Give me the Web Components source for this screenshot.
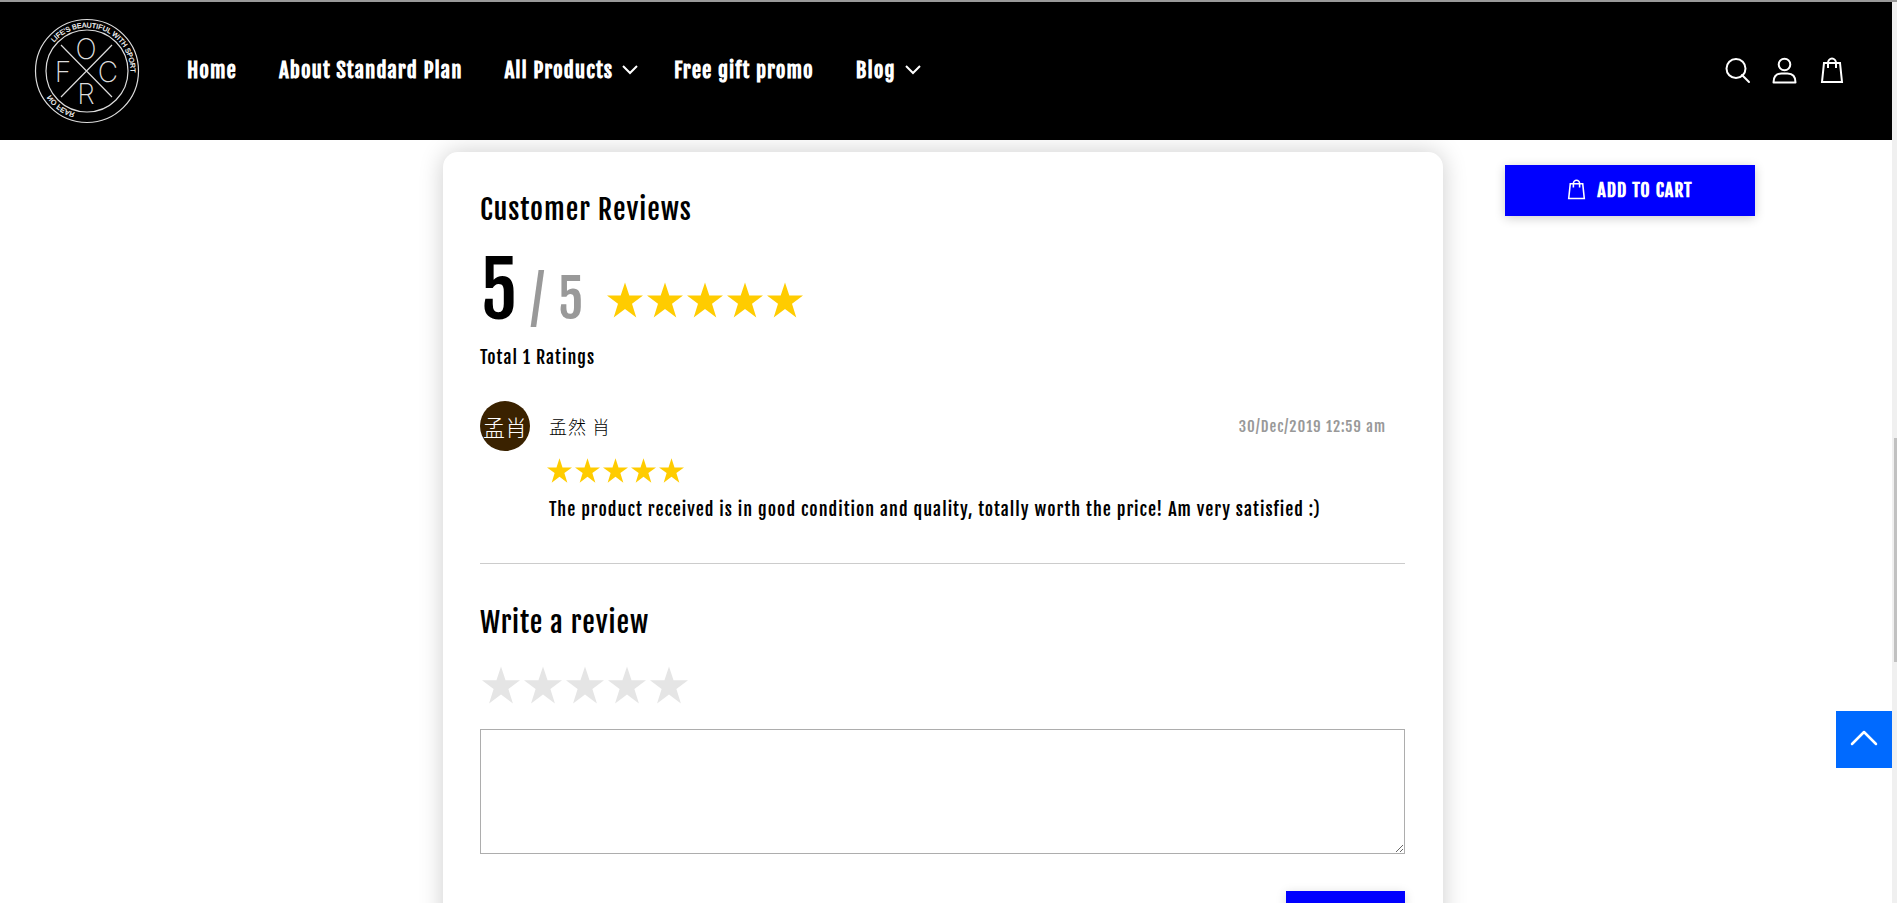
<!DOCTYPE html>
<html lang="en">
<head>
<meta charset="utf-8">
<meta name="viewport" content="width=device-width, initial-scale=1">
<title>Customer Reviews</title>
<style>
    * {
        box-sizing: border-box;
    }

    body {
        margin: 0;
        font-family: "Fjalla One", "Roboto Condensed", "Noto Sans CJK SC", sans-serif;
        font-size: 18px;
        line-height: 24px;
        letter-spacing: 1px;
        color: #000;
        background: #fff;
        overflow: hidden;
    }
</style>
</head>
<body>
<shop-page>
    <shop-header slot="header">
        <shop-logo slot="logo"></shop-logo>
        <nav-link>Home</nav-link>
        <nav-link>About Standard Plan</nav-link>
        <nav-link menu>All Products</nav-link>
        <nav-link>Free gift promo</nav-link>
        <nav-link menu>Blog</nav-link>
    </shop-header>
    <review-card>
        <rating-summary score="5" total="1"></rating-summary>
        <review-item initials="孟肖" name="孟然 肖" date="30/Dec/2019 12:59 am">The product received is in good condition and quality, totally worth the price! Am very satisfied :)</review-item>
        <review-form></review-form>
    </review-card>
    <cart-button slot="aside">ADD TO CART</cart-button>
</shop-page>

<script>
const bagPaths = `
    <path d="M4 6h16l2 19H2z"/>
    <path d="M8 11V6a4 4.5 0 0 1 8 0v5"/>
`;

class ShopPage extends HTMLElement {
    constructor() {
        super();
        this.attachShadow({ mode: "open" }).innerHTML = `
            <style>
                * { box-sizing: border-box; }
                :host {
                    display: grid;
                    grid-template-columns: minmax(0, 1fr) 5px;
                    height: 100vh;
                    border-top: 2px solid #999;
                }
                .view {
                    position: relative;
                    overflow: hidden;
                }
                main {
                    display: grid;
                    grid-template-columns: minmax(0, 1fr) minmax(0, 1000px) minmax(250px, 1fr);
                    align-items: start;
                    padding: 12px 6px 0 0;
                }
                .content { grid-column: 2; }
                aside {
                    max-width: 312px;
                    padding: 13px 0 0 62px;
                }
                .track {
                    display: grid;
                    grid-template-rows: 436fr 224fr 241fr;
                    padding-left: 2px;
                    background: #f0f0f0;
                }
                .thumb {
                    grid-row: 2;
                    background: #c1c1c1;
                }
                .top {
                    position: absolute;
                    right: 0;
                    bottom: 135px;
                    display: grid;
                    place-items: center;
                    width: 56px;
                    height: 57px;
                    padding: 0 0 4px;
                    border: 0;
                    background: #006aff;
                }
            </style>
            <div class="view">
                <slot name="header"></slot>
                <main>
                    <div class="content"><slot></slot></div>
                    <aside><slot name="aside"></slot></aside>
                </main>
                <button class="top" type="button" aria-label="Back to top">
                    <svg width="28" height="16" viewBox="0 0 28 16" fill="none" stroke="#fff" stroke-width="2.5" stroke-linecap="round" stroke-linejoin="round"><path d="M2 14 14 2l12 12"/></svg>
                </button>
            </div>
            <div class="track"><div class="thumb"></div></div>
        `;
    }
}

class ShopHeader extends HTMLElement {
    constructor() {
        super();
        this.attachShadow({ mode: "open" }).innerHTML = `
            <style>
                :host {
                    position: relative;
                    display: flex;
                    align-items: center;
                    height: 138px;
                    padding: 0 48px 0 34px;
                    box-sizing: border-box;
                    background: #000;
                    color: #fff;
                }
                nav {
                    display: flex;
                    margin-left: 47px;
                    padding-bottom: 2px;
                }
                .icons {
                    display: flex;
                    gap: 21px;
                    margin-left: auto;
                    padding-bottom: 2px;
                }
                a {
                    display: block;
                    height: 27px;
                    color: inherit;
                }
                svg {
                    display: block;
                    fill: none;
                    stroke: currentColor;
                    stroke-width: 2;
                }
            </style>
            <slot name="logo"></slot>
            <nav><slot></slot></nav>
            <div class="icons">
                <a href="#search" aria-label="Search"><svg width="27" height="27" viewBox="0 0 27 27"><circle cx="12" cy="11.5" r="9.5"/><path d="m18 18 7 7" stroke-linecap="round"/></svg></a>
                <a href="#account" aria-label="Account"><svg width="27" height="27" viewBox="0 0 27 27"><circle cx="12.5" cy="7.5" r="5.8"/><path d="M1.500 25.500q0-9 8-9h6q8 0 8 9z" stroke-linejoin="round"/></svg></a>
                <a href="#cart" aria-label="Cart"><svg width="24" height="27" viewBox="0 0 24 27">${bagPaths}</svg></a>
            </div>
        `;
    }
}

class ShopLogo extends HTMLElement {
    constructor() {
        super();
        this.attachShadow({ mode: "open" }).innerHTML = `
            <style>
                :host { display: block; }
                svg { display: block; }
                text {
                    font-family: Inter, "Liberation Sans", sans-serif;
                    letter-spacing: 0;
                    fill: #ddd;
                }
                .ring {
                    font: 7px "Liberation Sans", sans-serif;
                    fill: #fff;
                    stroke: #fff;
                    stroke-width: 0.2;
                }
                .letter {
                    font-size: 28px;
                    font-weight: 200;
                    text-anchor: middle;
                }
            </style>
            <svg width="106" height="106" viewBox="0 0 106 106" role="img" aria-label="FORC">
                <defs>
                    <path id="upper" d="M9.500 53a43.500 43.500 0 0 1 87 0v8"/>
                </defs>
                <g fill="none" stroke="#ddd" stroke-width="1.2">
                    <circle cx="53" cy="53" r="51.500"/>
                    <circle cx="53" cy="53" r="41"/>
                    <path d="m27 27 51 52M78 27 27 79"/>
                </g>
                <text class="ring"><textPath href="#upper" startOffset="31">LIFE'S BEAUTIFUL WITH SPORT</textPath></text>
                <g transform="translate(0 106) scale(1 -1)">
                    <text class="ring"><textPath href="#upper" startOffset="25">NO FEAR</textPath></text>
                </g>
                <text class="letter" x="52" y="41">O</text>
                <text class="letter" x="29" y="64">F</text>
                <text class="letter" x="74" y="64">C</text>
                <text class="letter" x="52" y="86">R</text>
            </svg>
        `;
    }
}

class NavLink extends HTMLElement {
    constructor() {
        super();
        const arrow = this.hasAttribute("menu")
            ? `<svg width="16" height="10" viewBox="0 0 16 10" fill="none" stroke="currentColor" stroke-width="2"><path d="m1 1 7 7 7-7"/></svg>`
            : "";
        this.attachShadow({ mode: "open" }).innerHTML = `
            <style>
                :host { display: block; }
                a {
                    display: flex;
                    align-items: center;
                    gap: 9px;
                    margin-right: 42px;
                    font-size: 21px;
                    font-weight: bold;
                    line-height: 30px;
                    color: #fff;
                    text-decoration: none;
                    white-space: nowrap;
                }
                :host([menu]) a { margin-right: 36px; }
            </style>
            <a href="#"><slot></slot>${arrow}</a>
        `;
    }
}

class ReviewCard extends HTMLElement {
    constructor() {
        super();
        this.attachShadow({ mode: "open" }).innerHTML = `
            <style>
                :host {
                    display: block;
                    padding: 40px 38px 80px 37px;
                    border-radius: 15px;
                    background: #fff;
                    box-shadow: 0 0 25px rgba(0, 0, 0, 0.2);
                }
            </style>
            <slot></slot>
        `;
    }
}

class StarRow extends HTMLElement {
    constructor() {
        super();
        const star = `<svg viewBox="0 0 36 35"><path d="M18 0l4.300 13H36L25 21.200 29.300 35 18 26.600 6.700 35 11 21.200 0 13h13.700z"/></svg>`;
        this.attachShadow({ mode: "open" }).innerHTML = `
            <style>
                :host {
                    display: flex;
                    gap: 4px;
                    color: #fc0;
                    --star: 36px;
                }
                :host([size="small"]) {
                    gap: 3px;
                    --star: 25px;
                }
                svg {
                    width: var(--star);
                    height: var(--star);
                    fill: currentColor;
                }
            </style>
            ${star.repeat(5)}
        `;
    }
}

class RatingSummary extends HTMLElement {
    constructor() {
        super();
        this.attachShadow({ mode: "open" }).innerHTML = `
            <style>
                :host { display: block; }
                h2 {
                    margin: 0;
                    font-size: 28px;
                    font-weight: normal;
                    line-height: 36px;
                }
                .score {
                    display: flex;
                    align-items: flex-end;
                    margin-top: 19px;
                }
                .number {
                    font-size: 75px;
                    line-height: 88px;
                }
                .outof {
                    font-size: 52px;
                    color: #999;
                }
                star-row {
                    margin: 0 0 26px 23px;
                }
                p {
                    margin: 1px 0 0;
                }
            </style>
            <h2>Customer Reviews</h2>
            <div class="score">
                <div class="number">${this.getAttribute("score")}<span class="outof"> / 5</span></div>
                <star-row></star-row>
            </div>
            <p>Total ${this.getAttribute("total")} Ratings</p>
        `;
    }
}

class ReviewItem extends HTMLElement {
    constructor() {
        super();
        this.attachShadow({ mode: "open" }).innerHTML = `
            <style>
                :host {
                    display: grid;
                    grid-template-columns: 50px minmax(0, 1fr) auto;
                    column-gap: 19px;
                    align-items: center;
                    margin-top: 32px;
                    padding-bottom: 42px;
                    border-bottom: 1px solid #ccc;
                }
                .avatar {
                    display: grid;
                    place-items: center;
                    height: 50px;
                    border-radius: 50%;
                    font: 300 22px/48px "Noto Sans CJK SC", sans-serif;
                    letter-spacing: 0;
                    white-space: nowrap;
                    color: #fff;
                    background: #3a2200;
                }
                .name {
                    font: 300 18px/24px "Noto Sans CJK SC", sans-serif;
                }
                time {
                    margin-right: 19px;
                    padding-top: 2px;
                    font-size: 15px;
                    color: #999;
                }
                star-row {
                    grid-column: 2 / -1;
                    margin-top: 7px;
                    margin-left: -2px;
                }
                p {
                    grid-column: 2 / -1;
                    margin: 14px 0 0;
                }
            </style>
            <div class="avatar">${this.getAttribute("initials")}</div>
            <span class="name">${this.getAttribute("name")}</span>
            <time datetime="2019-12-30T00:59">${this.getAttribute("date")}</time>
            <star-row size="small"></star-row>
            <p><slot></slot></p>
        `;
    }
}

class ReviewForm extends HTMLElement {
    constructor() {
        super();
        const stars = [1, 2, 3, 4, 5].map(n => `
            <label><input type="radio" name="rating" value="${n}" aria-label="${n} of 5"><svg viewBox="0 0 36 35"><path d="M18 0l4.300 13H36L25 21.200 29.300 35 18 26.600 6.700 35 11 21.200 0 13h13.700z"/></svg></label>
        `).join("");
        this.attachShadow({ mode: "open" }).innerHTML = `
            <style>
                * { box-sizing: border-box; }
                :host {
                    display: block;
                    margin-top: 41px;
                }
                form { display: grid; }
                h2 {
                    margin: 0;
                    font-size: 28px;
                    font-weight: normal;
                    line-height: 36px;
                }
                .stars {
                    display: flex;
                    gap: 4px;
                    margin: 25px 0;
                    padding: 0 0 0 2px;
                }
                label {
                    display: block;
                    height: 38px;
                }
                input {
                    position: absolute;
                    opacity: 0;
                    margin: 0;
                }
                svg {
                    display: block;
                    width: 38px;
                    height: 38px;
                    fill: #e5e5e5;
                }
                textarea {
                    width: 100%;
                    height: 125px;
                    padding: 10px;
                    border: 1px solid #adadad;
                    font: inherit;
                    background: #fff;
                }
                button {
                    justify-self: end;
                    width: 119px;
                    height: 51px;
                    margin-top: 37px;
                    border: 0;
                    background: #00f;
                    box-shadow: 0 2px 10px rgba(0, 0, 0, 0.15);
                }
            </style>
            <form>
                <h2 id="title">Write a review</h2>
                <div class="stars" role="radiogroup" aria-labelledby="title">${stars}</div>
                <textarea aria-labelledby="title"></textarea>
                <button type="button" aria-labelledby="title"></button>
            </form>
        `;
    }
}

class CartButton extends HTMLElement {
    constructor() {
        super();
        this.attachShadow({ mode: "open" }).innerHTML = `
            <style>
                :host { display: block; }
                button {
                    display: flex;
                    align-items: center;
                    justify-content: center;
                    gap: 11px;
                    width: 100%;
                    height: 51px;
                    padding: 0 0 2px;
                    border: 0;
                    font: inherit;
                    font-weight: bold;
                    letter-spacing: inherit;
                    color: #fff;
                    background: #00f;
                    box-shadow: 0 2px 10px rgba(0, 0, 0, 0.2);
                }
                svg {
                    width: 19px;
                    height: 21px;
                    fill: none;
                    stroke: currentColor;
                    stroke-width: 2;
                }
            </style>
            <button type="button"><svg viewBox="0 0 24 27">${bagPaths}</svg><slot></slot></button>
        `;
    }
}

customElements.define("shop-page", ShopPage);
customElements.define("shop-header", ShopHeader);
customElements.define("shop-logo", ShopLogo);
customElements.define("nav-link", NavLink);
customElements.define("review-card", ReviewCard);
customElements.define("star-row", StarRow);
customElements.define("rating-summary", RatingSummary);
customElements.define("review-item", ReviewItem);
customElements.define("review-form", ReviewForm);
customElements.define("cart-button", CartButton);
</script>
</body>
</html>
